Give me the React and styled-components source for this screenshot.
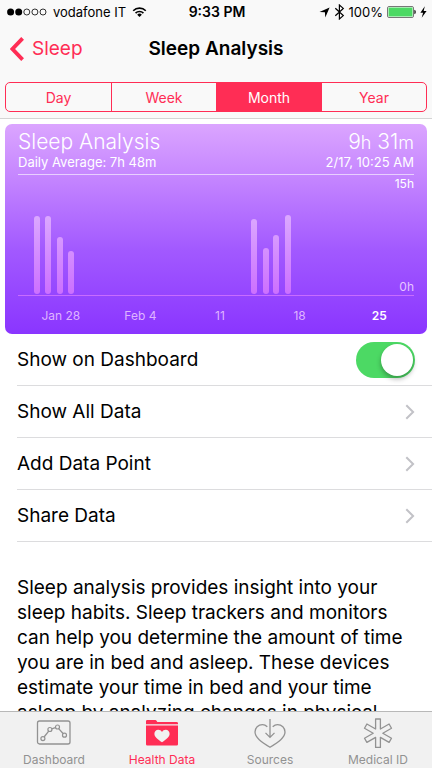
import React, { useState } from "react";
import styled, { createGlobalStyle } from "styled-components";

const RED = "#ff2d55";
const GREEN = "#4cd964";
const GREY = "#929292";

const GlobalStyle = createGlobalStyle`
  *, *::before, *::after { box-sizing: border-box; }
  body { margin: 0; background: #fff; }
  body, button, input { font-family: Inter, "Liberation Sans", sans-serif; }
  button { margin: 0; padding: 0; border: 0; background: none; color: inherit; cursor: pointer; }
`;

const Screen = styled.div`
  display: flex;
  flex-direction: column;
  height: 100vh;
  overflow: hidden;
  background: #fff;
  color: #000;
`;

const Header = styled.header`
  flex: none;
  background: #f9f9f9;
  border-bottom: 1px solid #d4d4d4;
`;

const StatusBar = styled.div`
  display: grid;
  grid-template-columns: 1fr auto 1fr;
  align-items: center;
  height: 24px;
  padding: 0 5px 0 7px;
  font-size: 13px;
  line-height: 24px;
  white-space: nowrap;
`;

const StatusGroup = styled.div`
  display: flex;
  align-items: center;
  justify-content: ${(p) => (p.$end ? "flex-end" : "flex-start")};
  gap: ${(p) => (p.$end ? 4 : 6)}px;
`;

const Clock = styled.span`
  font-size: 14px;
  font-weight: 600;
`;

const NavBar = styled.div`
  display: grid;
  grid-template-columns: 1fr auto 1fr;
  align-items: center;
  height: 50px;
  padding: 0 10px;
`;

const BackButton = styled.button`
  display: flex;
  align-items: center;
  justify-self: start;
  gap: 8px;
  color: ${RED};
  font-size: 19px;
  line-height: 24px;
`;

const Title = styled.h1`
  margin: 0;
  font-size: 19px;
  line-height: 24px;
  font-weight: 600;
`;

const Segments = styled.div`
  display: grid;
  grid-template-columns: repeat(4, 1fr);
  height: 30px;
  margin: 8px 5px 6px;
  border: 1px solid ${RED};
  border-radius: 5px;
  overflow: hidden;
`;

const Segment = styled.button`
  font-size: 14px;
  color: ${(p) => (p.$active ? "#fff" : RED)};
  && { background: ${(p) => (p.$active ? RED : "transparent")}; }
  & + & { border-left: 1px solid ${RED}; }
`;

const Content = styled.main`
  flex: 1;
  min-height: 0;
  overflow: hidden;
`;

const Card = styled.section`
  margin: 5px 5px 0;
  padding-top: 6px;
  border-radius: 7px;
  color: #fff;
  background: linear-gradient(#dba5ff 0%, #c586ff 25%, #a259ff 60%, #8a35ff 100%);
`;

const CardRow = styled.div`
  display: flex;
  justify-content: space-between;
  align-items: baseline;
  margin: 0 13px;
  white-space: nowrap;
`;

const CardTitle = styled.h2`
  margin: 0;
  font-size: 21px;
  line-height: 24px;
  font-weight: 350;
`;

const CardValue = styled(CardTitle).attrs({ as: "div" })``;

const Unit = styled.span`
  font-size: 18px;
`;

const CardNote = styled.div`
  font-size: 13px;
  line-height: 15px;
`;

const Plot = styled.svg`
  display: block;
  width: calc(100% - 26px);
  height: 124px;
  margin: 4px 13px 0;
  font-size: 12px;
`;

const Dates = styled.div`
  display: grid;
  grid-template-columns: repeat(5, 1fr);
  height: 36px;
  padding: 0 8px 0 16px;
  text-align: center;
  font-size: 12px;
  line-height: 36px;
`;

const DateLabel = styled.span`
  color: ${(p) => (p.$current ? "#fff" : "#dfb4ff")};
  font-weight: ${(p) => (p.$current ? 600 : 400)};
`;

const Row = styled.div`
  display: flex;
  align-items: center;
  justify-content: space-between;
  width: calc(100% - 17px);
  height: 52px;
  margin-left: 17px;
  padding-right: 17px;
  border-bottom: 1px solid #dcdcde;
  font-size: 19px;
  line-height: 24px;
  text-align: left;
`;

const LinkRow = styled(Row).attrs({ as: "button" })`
  && { margin-left: 17px; padding-right: 17px; border-bottom: 1px solid #dcdcde; }
`;

const Switch = styled.input`
  appearance: none;
  display: flex;
  width: 59px;
  height: 36px;
  margin: 0;
  padding: 2px;
  border-radius: 18px;
  background: ${(p) => (p.checked ? GREEN : "#e5e5e5")};
  justify-content: ${(p) => (p.checked ? "flex-end" : "flex-start")};
  cursor: pointer;
  &::before {
    content: "";
    width: 32px;
    height: 32px;
    border-radius: 50%;
    background: #fff;
    box-shadow: 0 3px 5px rgba(0, 0, 0, 0.3);
  }
`;

const Description = styled.p`
  margin: 33px 20px 0 17px;
  font-size: 19px;
  line-height: 25px;
`;

const TabBar = styled.nav`
  flex: none;
  display: grid;
  grid-template-columns: repeat(4, 1fr);
  height: 57px;
  border-top: 1px solid #b8b8b8;
  background: #f1f1f1;
`;

const Tab = styled.button`
  display: flex;
  flex-direction: column;
  align-items: center;
  && { padding-top: 5px; color: ${(p) => (p.$active ? RED : GREY)}; }
  font-size: 12px;
  line-height: 16px;
  gap: 3px;
`;

function SignalDots() {
  return (
    <svg width="40" height="10" viewBox="0 0 40 10" aria-hidden="true">
      {[0, 1, 2, 3, 4].map((i) => (
        <circle key={i} cx={3.6 + i * 8.1} cy="5" r={i < 2 ? 3.5 : 3} fill={i < 2 ? "#000" : "none"} stroke="#000" strokeWidth={i < 2 ? 0 : 0.8} />
      ))}
    </svg>
  );
}

function WifiIcon() {
  return (
    <svg width="15" height="12" viewBox="0 0 16 12" fill="none" stroke="#000" strokeWidth="1.7" aria-hidden="true">
      <path d="M1.3 4.7a9.4 9.4 0 0 1 13.4 0M3.8 7.2a5.9 5.9 0 0 1 8.4 0" />
      <path d="M8 11.4 5.5 8.9a3.6 3.6 0 0 1 5 0Z" fill="#000" stroke="none" />
    </svg>
  );
}

function LocationIcon() {
  return (
    <svg width="11" height="11" viewBox="0 0 11 11" aria-hidden="true">
      <path d="M10.6.5 6.3 10.6 5.9 5.3.5 5Z" />
    </svg>
  );
}

function BluetoothIcon() {
  return (
    <svg width="11" height="16" viewBox="0 0 11 16" fill="none" stroke="#000" strokeWidth="1.2" aria-hidden="true">
      <path d="m1.3 4.3 8 7.3L5.4 15V1l3.9 3.4-8 7.3" />
    </svg>
  );
}

function BatteryIcon() {
  return (
    <svg width="29" height="12" viewBox="0 0 29 12" aria-hidden="true">
      <rect x=".5" y=".5" width="26" height="11" rx="1.5" fill="#fff" stroke="#777" />
      <rect x="1.5" y="1.5" width="24" height="9" rx=".5" fill={GREEN} />
      <path d="M27.3 3.8q1.6.4 1.6 2.2t-1.6 2.2Z" fill="#222" />
    </svg>
  );
}

function BoltIcon() {
  return (
    <svg width="7" height="12" viewBox="0 0 7 12" aria-hidden="true">
      <path d="M4.8.3.4 6.8h2.7L1.7 11.7 6.6 5H3.7Z" />
    </svg>
  );
}

function BackIcon() {
  return (
    <svg width="14" height="24" viewBox="0 0 14 24" fill="none" stroke={RED} strokeWidth="3.8" aria-hidden="true">
      <path d="M12.6 1.4 2.5 12l10.1 10.6" />
    </svg>
  );
}

function ChevronIcon() {
  return (
    <svg width="10" height="16" viewBox="0 0 10 16" fill="none" stroke="#c2c2c7" strokeWidth="2" aria-hidden="true">
      <path d="m1.3 1.2 6.8 6.8-6.8 6.8" />
    </svg>
  );
}

function DashboardIcon() {
  return (
    <svg width="36" height="32" viewBox="0 0 36 32" fill="none" stroke="currentColor" aria-hidden="true">
      <rect x="1.5" y="4" width="32.5" height="23" rx="2" strokeWidth="1.3" />
      <path d="m8.1 20 4.8-6.1M15.7 11.8l3.7-1.2M22.9 11.9l4.4 4.9" strokeWidth="1.3" />
      <circle cx="6.9" cy="21.6" r="2" strokeWidth="1.2" />
      <circle cx="13.9" cy="12.5" r="2" strokeWidth="1.2" />
      <circle cx="21.5" cy="10" r="2" strokeWidth="1.2" />
      <circle cx="28.5" cy="18.2" r="2" strokeWidth="1.2" />
    </svg>
  );
}

function HealthDataIcon() {
  return (
    <svg width="36" height="32" viewBox="0 0 36 32" fill="currentColor" aria-hidden="true">
      <path d="M2 7.2V4.300q0-1.300 1.300-1.300h8q.9 0 1.400.9l.6 1h19.200q1.500 0 1.500 1.400v.9Z" />
      <path d="M2 8.4h32v18.800q0 1.300-1.300 1.300H3.300Q2 28.500 2 27.200Z" />
      <path d="M18 25.300c-4.500-3-7.600-5.400-7.600-8.500 0-2.300 1.600-4 3.800-4 1.700 0 3 .8 3.800 2.300.8-1.500 2.100-2.300 3.800-2.300 2.200 0 3.800 1.700 3.800 4 0 3.100-3.100 5.500-7.600 8.500Z" fill="#f1f1f1" />
    </svg>
  );
}

function SourcesIcon() {
  return (
    <svg width="36" height="32" viewBox="0 0 36 32" fill="none" stroke="currentColor" strokeWidth="1.3" aria-hidden="true">
      <path d="M15.3 9.8C13.9 8.5 12.3 7.7 10.5 7.7 6.2 7.7 3 10.9 3 15.1c0 5.500 6.300 9.700 15 15.200 8.700-5.500 15-9.700 15-15.200 0-4.200-3.200-7.400-7.500-7.400-1.800 0-3.400.8-4.800 2.100" />
      <path d="M18 2v18.300M13.500 15.900l4.500 4.500 4.500-4.500" />
    </svg>
  );
}

function MedicalIcon() {
  return (
    <svg width="36" height="32" viewBox="0 0 36 32" fill="none" stroke="currentColor" strokeWidth="1.3" strokeLinejoin="round" aria-hidden="true">
      <path d="M15.6 2h4.800v10l8.700-5 2.400 4.200-8.700 5 8.700 5-2.400 4.200-8.700-5v10h-4.800v-10l-8.700 5-2.400-4.200 8.700-5-8.700-5L6.900 7l8.700 5Z" />
    </svg>
  );
}

const PLOT_WIDTH = 396;
const BARS = [
  { x: 16, height: 78 },
  { x: 27, height: 78 },
  { x: 39, height: 57 },
  { x: 50, height: 43 },
  { x: 233, height: 75 },
  { x: 245, height: 46 },
  { x: 255, height: 59 },
  { x: 267, height: 79 },
];

function SleepPlot() {
  return (
    <Plot role="img" aria-label="Hours of sleep per night">
      <defs>
        <linearGradient id="bar" gradientUnits="userSpaceOnUse" x1="0" y1="42" x2="0" y2="121">
          <stop offset="0" stopColor="#dba8ff" />
          <stop offset="1" stopColor="#cc6fff" />
        </linearGradient>
      </defs>
      <rect y="0" width="100%" height="1" fill="#fff" fillOpacity=".6" />
      <rect y="121" width="100%" height="1" fill="#c86cff" />
      {BARS.map((bar) => (
        <rect key={bar.x} x={`${(bar.x / PLOT_WIDTH) * 100}%`} y={120 - bar.height} width="6" height={bar.height} rx="3" fill="url(#bar)" />
      ))}
      <text x="100%" y="14" textAnchor="end" fill="#fff">15h</text>
      <text x="100%" y="117" textAnchor="end" fill="#e6c4ff">0h</text>
    </Plot>
  );
}

const PERIODS = ["Day", "Week", "Month", "Year"];
const DATES = ["Jan 28", "Feb 4", "11", "18", "25"];
const LINKS = ["Show All Data", "Add Data Point", "Share Data"];
const TABS = [
  { label: "Dashboard", Icon: DashboardIcon },
  { label: "Health Data", Icon: HealthDataIcon },
  { label: "Sources", Icon: SourcesIcon },
  { label: "Medical ID", Icon: MedicalIcon },
];

export default function App() {
  const [period, setPeriod] = useState("Month");
  const [shown, setShown] = useState(true);
  const [tab, setTab] = useState("Health Data");

  return (
    <Screen>
      <GlobalStyle />
      <Header>
        <StatusBar>
          <StatusGroup>
            <SignalDots />
            <span>vodafone IT</span>
            <WifiIcon />
          </StatusGroup>
          <Clock>9:33 PM</Clock>
          <StatusGroup $end>
            <LocationIcon />
            <BluetoothIcon />
            <span>100%</span>
            <BatteryIcon />
            <BoltIcon />
          </StatusGroup>
        </StatusBar>
        <NavBar>
          <BackButton type="button">
            <BackIcon />
            Sleep
          </BackButton>
          <Title>Sleep Analysis</Title>
        </NavBar>
        <Segments role="group" aria-label="Period">
          {PERIODS.map((name) => (
            <Segment key={name} type="button" $active={name === period} aria-pressed={name === period} onClick={() => setPeriod(name)}>
              {name}
            </Segment>
          ))}
        </Segments>
      </Header>

      <Content>
        <Card>
          <CardRow>
            <CardTitle>Sleep Analysis</CardTitle>
            <CardValue>
              9<Unit>h</Unit> 31<Unit>m</Unit>
            </CardValue>
          </CardRow>
          <CardRow>
            <CardNote>Daily Average: 7h 48m</CardNote>
            <CardNote>2/17, 10:25 AM</CardNote>
          </CardRow>
          <SleepPlot />
          <Dates>
            {DATES.map((date) => (
              <DateLabel key={date} $current={date === "25"}>
                {date}
              </DateLabel>
            ))}
          </Dates>
        </Card>

        <Row>
          <label htmlFor="dashboard-switch">Show on Dashboard</label>
          <Switch id="dashboard-switch" type="checkbox" role="switch" checked={shown} onChange={(e) => setShown(e.target.checked)} />
        </Row>
        {LINKS.map((name) => (
          <LinkRow key={name} type="button">
            {name}
            <ChevronIcon />
          </LinkRow>
        ))}

        <Description>
          Sleep analysis provides insight into your sleep habits. Sleep trackers and monitors can help you determine the
          amount of time you are in bed and asleep. These devices estimate your time in bed and your time asleep by
          analyzing changes in physical
        </Description>
      </Content>

      <TabBar>
        {TABS.map(({ label, Icon }) => (
          <Tab key={label} type="button" $active={label === tab} onClick={() => setTab(label)}>
            <Icon />
            {label}
          </Tab>
        ))}
      </TabBar>
    </Screen>
  );
}
